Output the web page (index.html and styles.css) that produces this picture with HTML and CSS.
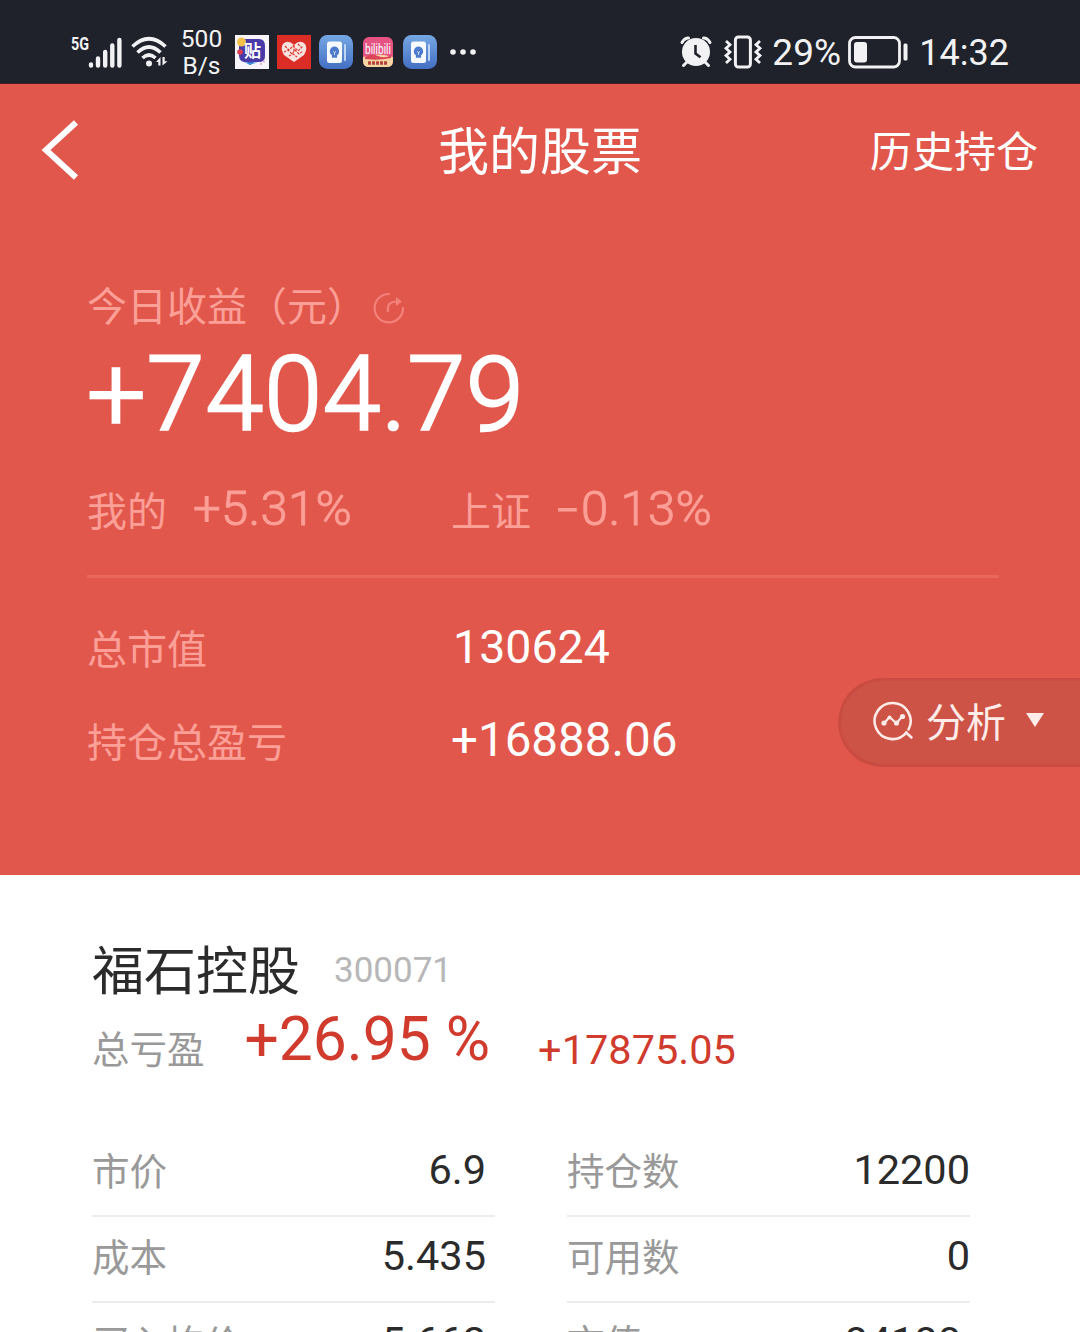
FILE: index.html
```html
<!DOCTYPE html>
<html lang="zh-CN">

<head>
    <meta charset="UTF-8">
    <meta name="viewport" content="width=device-width, initial-scale=1.0">
    <title>我的股票</title>
    <link rel="stylesheet" href="styles.css">
</head>

<body>
    <div class="status-bar">
        <div class="status-left">
            <svg class="signal" width="52" height="34" viewBox="0 0 52 34">
                <text x="0" y="15" class="net-type" textLength="18" lengthAdjust="spacingAndGlyphs">5G</text>
                <g stroke="#f2f2f4" stroke-width="4.4" stroke-linecap="round">
                    <path d="M20 29.500v1M27 23.500v7M34.200 17v13.500M41.300 10.500v20M48.400 5v25.500" />
                </g>
            </svg>
            <svg class="wifi" width="38" height="34" viewBox="0 0 38 34">
                <g fill="none" stroke="#f2f2f4" stroke-width="3.600">
                    <path d="M1.500 11.500Q18 -4 34.500 11.500" />
                    <path d="M6.500 17.500Q18 6.500 29.500 17.500" />
                    <path d="M11.500 23Q18 17 24.500 23" />
                </g>
                <circle cx="18" cy="28.500" r="3" fill="#f2f2f4" />
                <path d="M25 27l4.500-5v8.500h-2.200V27zM31.500 22v8.500l5-4.200h-2.800V22z" fill="#f2f2f4" />
            </svg>
            <div class="net-speed"><span>500</span><span>B/s</span></div>
            <svg class="app" width="34" height="34" viewBox="0 0 34 34">
                <rect width="34" height="34" fill="#f7f5fb" />
                <path d="M9 4h15q6 0 6 7v10q0 6-6 6h-5l-4 3-3-3H9q-5-1-5-7V10q0-6 5-6z" fill="#4a3aa8" />
                <path d="M9 27q8 1 14 0l-8 3z" fill="#3c8fe0" />
                <circle cx="6.500" cy="7" r="4.500" fill="#f2c14b" />
                <circle cx="5" cy="17" r="2.800" fill="#d93d4e" />
                <path d="M25 29h2M28 26.500h2" stroke="#e7a0d0" stroke-width="1.500" />
                <text x="9" y="22" class="tieba">贴</text>
            </svg>
            <svg class="app" width="34" height="34" viewBox="0 0 34 34">
                <rect width="34" height="34" fill="#db2d25" />
                <path d="M17 27L7 20Q3 13 6 9q5-5 11 1q6-6 11-1q3 4-1 11z" fill="#f9e3df" />
                <path d="M8 11l4 4 4-4 5 5 5-5M7 17l4-2 4 4 3-4 4 4 4-3M12 21l4-2 4 3M17 10v6M21 9l3 3" fill="none" stroke="#db2d25" stroke-width="1.100" stroke-dasharray="2.500 1.200" />
            </svg>
            <svg class="app" width="34" height="34" viewBox="0 0 34 34">
                <defs>
                    <linearGradient id="blue" x1="0" y1="0" x2="0" y2="1">
                        <stop offset="0" stop-color="#75a7e2" />
                        <stop offset="1" stop-color="#446fc4" />
                    </linearGradient>
                </defs>
                <g id="bulb-app">
                    <rect width="34" height="34" rx="8.500" fill="url(#blue)" />
                    <rect x="8" y="6.500" width="15" height="21.500" rx="2.500" fill="#f6f9fe" />
                    <rect x="25" y="9" width="2" height="17" rx="1" fill="#bcd4f5" />
                    <path d="M15.500 11.500a4.800 4.800 0 0 0-2.600 8.700v2.600h5.200v-2.600a4.800 4.800 0 0 0-2.600-8.700z" fill="#4d7bcb" />
                    <path d="M14 16.500l1.500 1 1.500-1M15.500 17.500V20" fill="none" stroke="#d9e6fa" stroke-width=".9" />
                </g>
            </svg>
            <svg class="app" width="34" height="34" viewBox="0 0 34 34">
                <rect x="2" y="2" width="30" height="30" rx="6" fill="#e55382" />
                <path d="M2 22q15-5 30 0v4q0 6-6 6H8q-6 0-6-6z" fill="#f7d6a4" />
                <path d="M4 22q6-4 13-1t13-1v3q-13 3-26 1z" fill="#dc4557" />
                <path d="M7 28h20" stroke="#b5433d" stroke-width="3.500" stroke-dasharray="3 1" />
                <text x="4" y="18.500" class="bili" textLength="26" lengthAdjust="spacingAndGlyphs">bilibili</text>
            </svg>
            <svg class="app" width="34" height="34" viewBox="0 0 34 34">
                <use href="#bulb-app" />
            </svg>
            <svg class="more" width="28" height="8" viewBox="0 0 28 8">
                <g fill="#f2f2f4">
                    <circle cx="4" cy="4" r="2.800" />
                    <circle cx="14" cy="4" r="2.800" />
                    <circle cx="24" cy="4" r="2.800" />
                </g>
            </svg>
        </div>
        <div class="status-right">
            <svg class="alarm" width="32" height="32" viewBox="0 0 32 32">
                <g stroke="#f2f2f4" stroke-width="3" stroke-linecap="round" fill="none">
                    <path d="M2 6.500Q4.500 2 8.500 2M30 6.500Q27.500 2 23.500 2M7 26l-3.500 3.500M25 26l3.500 3.500" />
                </g>
                <circle cx="16" cy="16" r="14" fill="#f2f2f4" />
                <path d="M15.500 9v8.500l5 3.800" fill="none" stroke="#1f222b" stroke-width="2.600" />
            </svg>
            <svg class="vibrate" width="38" height="34" viewBox="0 0 38 34">
                <g fill="none" stroke="#f2f2f4" stroke-width="2.800">
                    <rect x="11.400" y="2" width="15" height="30" rx="3" stroke-width="3" />
                    <path d="M2 6l4 3.700-4 3.600 4 3.700-4 3.600 4 3.700L2 28" />
                    <path d="M36 6l-4 3.700 4 3.600-4 3.700 4 3.600-4 3.700 4 3.700" />
                </g>
            </svg>
            <span class="battery-level">29%</span>
            <svg class="battery" width="60" height="34" viewBox="0 0 60 34">
                <rect x="1.500" y="2.500" width="50" height="29.500" rx="6" fill="none" stroke="#f2f2f4" stroke-width="2.800" />
                <rect x="6" y="7" width="13" height="20.500" rx="3" fill="#f2f2f4" />
                <rect x="55.500" y="8.500" width="4" height="17" rx="1.500" fill="#f2f2f4" />
            </svg>
            <span class="clock">14:32</span>
        </div>
    </div>

    <section class="hero">
        <div class="navbar">
            <svg class="back" width="38" height="60" viewBox="0 0 38 60">
                <path d="M34 2.500L4 30l30 27.500" fill="none" stroke="#fff" stroke-width="6" />
            </svg>
            <h1>我的股票</h1>
            <a class="history">历史持仓</a>
        </div>
        <div class="summary">
            <div class="today">
                <span>今日收益（元）</span>
                <svg width="34" height="34" viewBox="0 0 34 34">
                    <g fill="none" stroke="#f38179" stroke-width="2.200" stroke-linecap="round">
                        <path d="M17 3A14.200 14.200 0 1 0 31 17" />
                        <path d="M16 20c-1-6 2-9.500 9-9.500" />
                    </g>
                    <path d="M24 6l6 4.500-6 4.500z" fill="#f38179" />
                </svg>
            </div>
            <div class="profit">+7404.79</div>
            <div class="row compare">
                <div class="cell"><span>我的</span><span class="num">+5.31%</span></div>
                <div class="cell"><span>上证</span><span class="num"><i class="minus">-</i>0.13%</span></div>
            </div>
            <div class="divider"></div>
            <div class="row">
                <div class="cell">总市值</div>
                <div class="num white market">130624</div>
            </div>
            <div class="row">
                <div class="cell">持仓总盈亏</div>
                <div class="num white">+16888.06</div>
            </div>
        </div>
        <!-- floating analysis button -->
        <div class="analysis">
            <svg width="40" height="40" viewBox="0 0 40 40">
                <g fill="none" stroke="#ffebe8" stroke-width="2.600" stroke-linecap="round">
                    <path d="M32.500 32.500a18 18 0 1 1 2-3M32 32.500l5.500 5" />
                    <path d="M10 23.500l5.500-6.500 7 6.500 5.500-7" stroke-width="2.200" />
                </g>
                <g fill="#ffebe8">
                    <circle cx="10" cy="23" r="2.600" />
                    <circle cx="15.500" cy="17.500" r="2" />
                    <circle cx="22.500" cy="23" r="2.600" />
                    <circle cx="28.500" cy="16.500" r="2.600" />
                </g>
            </svg>
            <span>分析</span>
            <i class="caret"></i>
        </div>
    </section>

    <section class="stock">
        <div class="stock-name">
            <h2>福石控股</h2>
            <span class="code">300071</span>
        </div>
        <div class="stock-total">
            <span class="label">总亏盈</span>
            <span class="percent">+26.95 %</span>
            <span class="amount">+17875.05</span>
        </div>
        <div class="details">
            <div class="item"><span class="label">市价</span><span class="value inset">6.9</span></div>
            <div class="item"><span class="label">持仓数</span><span class="value">12200</span></div>
            <div class="item"><span class="label">成本</span><span class="value inset">5.435</span></div>
            <div class="item"><span class="label">可用数</span><span class="value">0</span></div>
            <div class="item"><span class="label">买入均价</span><span class="value inset">5.662</span></div>
            <div class="item"><span class="label">市值</span><span class="value inset">84180</span></div>
        </div>
    </section>
</body>

</html>
```

FILE: styles.css
```css
* {
    box-sizing: border-box;
}

body {
    margin: 0;
    width: 1080px;
    height: 1332px;
    overflow: hidden;
    background: #fff;
    font-family: "Noto Sans CJK SC", sans-serif;
    white-space: nowrap;
}

svg {
    display: block;
    flex: none;
    overflow: visible;
}

h1,
h2 {
    margin: 0;
    font-weight: 400;
}

/* status bar */
.status-bar {
    height: 84px;
    padding: 20px 71px 0 71px;
    display: flex;
    justify-content: space-between;
    background: #1f222b;
    border-bottom: 1px solid #4a1a1c;
    color: #f2f2f4;
    font-family: Roboto, sans-serif;
}

.status-left,
.status-right {
    display: flex;
    align-items: center;
    height: 64px;
}

.net-type {
    font: 700 19px Roboto, sans-serif;
    fill: #f2f2f4;
}

.wifi {
    margin-left: 8px;
}

.net-speed {
    display: flex;
    flex-direction: column;
    align-items: center;
    width: 43px;
    margin: -1px 0 0 11px;
    font-size: 24.500px;
    line-height: 27px;
}

.app {
    margin-left: 8px;
}

.net-speed + .app {
    margin-left: 12px;
}

.tieba {
    font: 700 17px "Noto Sans CJK SC", sans-serif;
    fill: #fff;
}

.bili {
    font: 400 14px Roboto, sans-serif;
    fill: #fff;
}

.more {
    margin-left: 12px;
}

.vibrate {
    margin-left: 12px;
}

.battery-level {
    margin: 1px 0 0 10px;
    width: 68px;
    font-size: 37px;
}

.battery {
    margin-left: 8px;
}

.clock {
    margin: 1px 0 0 11px;
    font-size: 36px;
}

/* red area */
.hero {
    position: relative;
    height: 791px;
    background: #e2574c;
    color: #fb9f97;
}

.navbar {
    display: grid;
    grid-template-columns: 1fr auto 1fr;
    align-items: center;
    height: 132px;
    padding: 0 42px;
    color: #fff;
}

.navbar h1 {
    font-size: 51px;
    line-height: 60px;
    margin-top: -4px;
}

.history {
    justify-self: end;
    font-size: 42px;
    line-height: 50px;
    margin-top: -2px;
}

.summary {
    padding: 64px 81px 0 87px;
    font-size: 40px;
    line-height: 48px;
}

.today {
    display: flex;
    align-items: center;
    height: 48px;
}

.today svg {
    margin: 7px 0 0 5px;
}

.profit {
    height: 132px;
    padding-top: 1px;
    line-height: 132px;
    color: #fff;
    font-family: Roboto, sans-serif;
    font-size: 104px;
    font-weight: 300;
    letter-spacing: 1px;
    -webkit-text-stroke: 2.500px #fff;
}

.row {
    display: flex;
    align-items: center;
    height: 93px;
}

.compare {
    height: 98px;
}

.cell {
    display: flex;
    align-items: center;
    width: 364px;
}

.cell .num {
    margin-left: 26px;
    font-size: 49px;
    font-weight: 300;
    letter-spacing: .3px;
    -webkit-text-stroke: 1px #fb9f97;
}

.num {
    font-family: Roboto, sans-serif;
    font-size: 47.500px;
}

.market {
    margin-left: 2px;
    font-size: 46.500px;
}

.white {
    color: #fff;
}

.minus {
    display: inline-block;
    width: 24px;
    font-style: normal;
    transform: scaleX(1.500);
    transform-origin: left;
}

.divider {
    height: 3px;
    margin: 17px 0 22px;
    background: #e9665d;
}

.analysis {
    position: absolute;
    right: 0;
    top: 594px;
    width: 242px;
    height: 89px;
    padding-left: 33px;
    display: flex;
    align-items: center;
    background: #cc5346;
    border: 3px solid #c94b41;
    border-right: 0;
    border-radius: 45px 0 0 45px;
    color: #ffebe8;
    font-size: 40px;
    line-height: 48px;
}

.analysis svg {
    margin-top: -5px;
}

.analysis span {
    margin: -6px 0 0 12px;
}

.caret {
    margin: -6px 0 0 20px;
    border: 9px solid transparent;
    border-top: 14px solid #ffebe8;
    border-bottom: 0;
}

/* stock card */
.stock {
    padding: 55px 110px 0 92px;
    color: #2b2b2b;
}

.stock-name {
    display: flex;
    align-items: center;
    height: 74px;
}

.stock-name h2 {
    font-size: 52px;
    line-height: 60px;
    margin-top: 2px;
}

.code {
    margin: 6px 0 0 34px;
    color: #b7b7b7;
    font-family: Roboto, sans-serif;
    font-size: 35px;
}

.stock-total {
    display: flex;
    align-items: center;
    height: 86px;
    color: #d03b2d;
    font-family: Roboto, sans-serif;
}

.label {
    color: #999;
    font-family: "Noto Sans CJK SC", sans-serif;
    font-size: 37.500px;
    line-height: 46px;
}

.percent {
    margin: -16px 0 0 40px;
    font-size: 60.500px;
}

.amount {
    margin: 4px 0 0 48px;
    font-size: 41.500px;
}

.details {
    display: grid;
    grid-template-columns: 403px 403px;
    column-gap: 72px;
    margin-top: 41px;
}

.item {
    display: flex;
    align-items: center;
    justify-content: space-between;
    height: 86px;
    padding-bottom: 9px;
    border-bottom: 2px solid #ececec;
}

.value {
    margin-top: 3px;
    font-family: Roboto, sans-serif;
    font-size: 41.500px;
    line-height: 46px;
}

.inset {
    margin-right: 9px;
}
```
